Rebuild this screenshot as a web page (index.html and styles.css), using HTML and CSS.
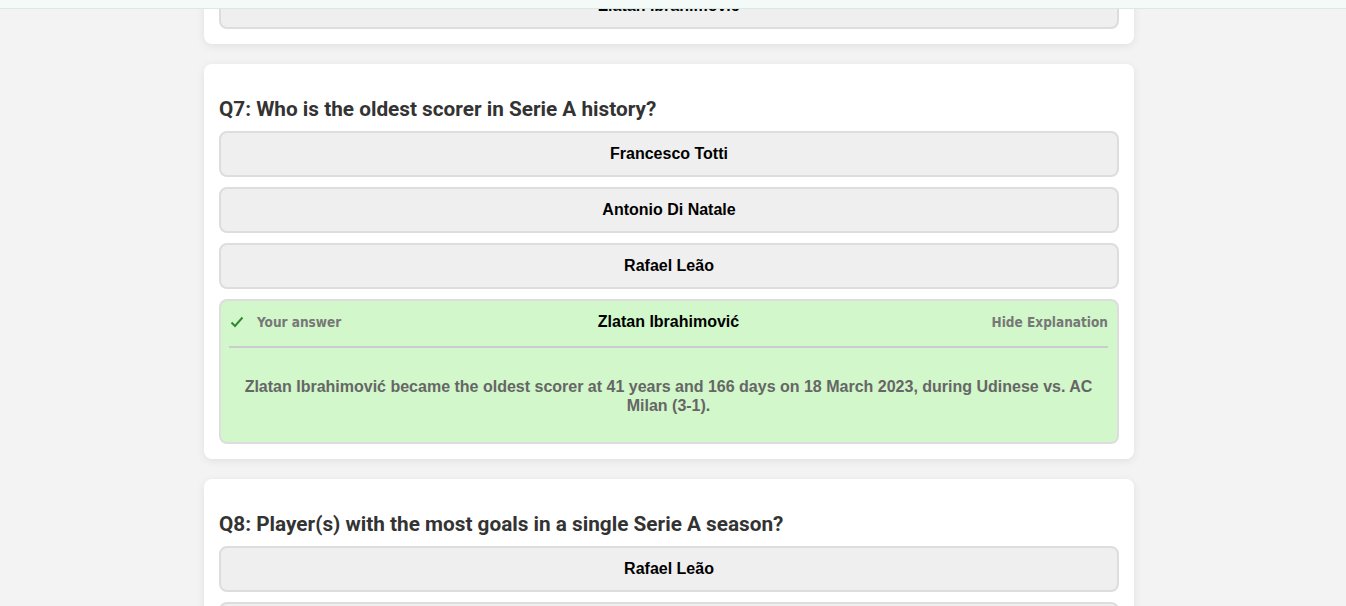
FILE: index.html
```html
<!DOCTYPE html>
<html lang="en">
<head>
<meta charset="utf-8">
<title>Serie A Quiz</title>
<link rel="stylesheet" href="styles.css">
</head>
<body>
<header class="topbar"></header>
<main class="quiz">
  <section class="card card-prev">
    <div class="option">Zlatan Ibrahimović</div>
  </section>

  <section class="card">
    <h2 class="question">Q7: Who is the oldest scorer in Serie A history?</h2>
    <div class="options">
      <div class="option">Francesco Totti</div>
      <div class="option">Antonio Di Natale</div>
      <div class="option">Rafael Leão</div>
      <div class="option option-correct">
        <div class="answer-head">
          <div class="answer-left">
            <svg class="check" width="14" height="12" viewBox="0 0 14 12" aria-hidden="true">
              <polyline points="1.5,6.5 5,10 12.5,1.5" fill="none" stroke="#2f8a2f" stroke-width="2"/>
            </svg>
            <span class="your-answer">Your answer</span>
          </div>
          <div class="answer-name">Zlatan Ibrahimović</div>
          <div class="answer-right"><span class="toggle">Hide Explanation</span></div>
        </div>
        <p class="explanation">Zlatan Ibrahimović became the oldest scorer at 41 years and 166 days on 18 March 2023, during Udinese vs. AC Milan (3-1).</p>
      </div>
    </div>
  </section>

  <section class="card">
    <h2 class="question">Q8: Player(s) with the most goals in a single Serie A season?</h2>
    <div class="options">
      <div class="option">Rafael Leão</div>
      <div class="option">Gonzalo Higuaín</div>
      <div class="option">Ciro Immobile</div>
    </div>
  </section>
</main>
</body>
</html>
```

FILE: styles.css
```css
html, body {
  margin: 0;
  padding: 0;
  background: #f3f3f3;
  overflow: hidden;
  height: 606px;
}

.topbar {
  position: fixed;
  top: 0;
  left: 0;
  right: 0;
  height: 8px;
  background: #f3faf8;
  border-bottom: 1px solid #d6ebe3;
  z-index: 10;
}

.quiz {
  width: 930px;
  margin: -17px auto 0;
  padding-right: 8px;
  box-sizing: content-box;
  display: flex;
  flex-direction: column;
  gap: 20px;
}

.card {
  background: #ffffff;
  border-radius: 8px;
  box-shadow: 0 2px 8px rgba(0, 0, 0, 0.08);
  padding: 15px;
}

.card-prev {
  padding-top: 0;
}

.question {
  font-family: Roboto, "Liberation Sans", sans-serif;
  font-weight: 700;
  font-size: 20.75px;
  line-height: 24px;
  color: #333333;
  margin: 18px 0 10px;
}

.options {
  display: flex;
  flex-direction: column;
  gap: 10px;
}

.option {
  background: #efefef;
  border: 2px solid #dddddd;
  border-radius: 8px;
  height: 42px;
  display: flex;
  align-items: center;
  justify-content: center;
  font-family: "Liberation Sans", Arial, sans-serif;
  font-weight: 700;
  font-size: 16px;
  color: #000000;
}

.option-correct {
  height: auto;
  display: block;
  background: #d1f7ca;
  padding: 0 9px 0 8px;
}

.answer-head {
  display: grid;
  grid-template-columns: 1fr auto 1fr;
  align-items: center;
  padding: 11px 0 14px;
  border-bottom: 2px solid #cccccc;
  height: 20px;
}

.answer-left {
  display: flex;
  align-items: center;
  gap: 13px;
  padding-left: 1px;
}

.check {
  display: block;
}

.your-answer,
.toggle {
  font-family: "DejaVu Sans Condensed", "DejaVu Sans", Tahoma, sans-serif;
  font-stretch: condensed;
  font-weight: 700;
  font-size: 13.5px;
  color: #777777;
}

.answer-name {
  font-family: "Liberation Sans", Arial, sans-serif;
  font-weight: 700;
  font-size: 16px;
  color: #000000;
}

.answer-right {
  display: flex;
  justify-content: flex-end;
}

.explanation {
  margin: 0;
  padding: 29px 10px 27px;
  text-align: center;
  font-family: "Liberation Sans", Arial, sans-serif;
  font-weight: 700;
  font-size: 16px;
  line-height: 19px;
  color: #666666;
}
```
